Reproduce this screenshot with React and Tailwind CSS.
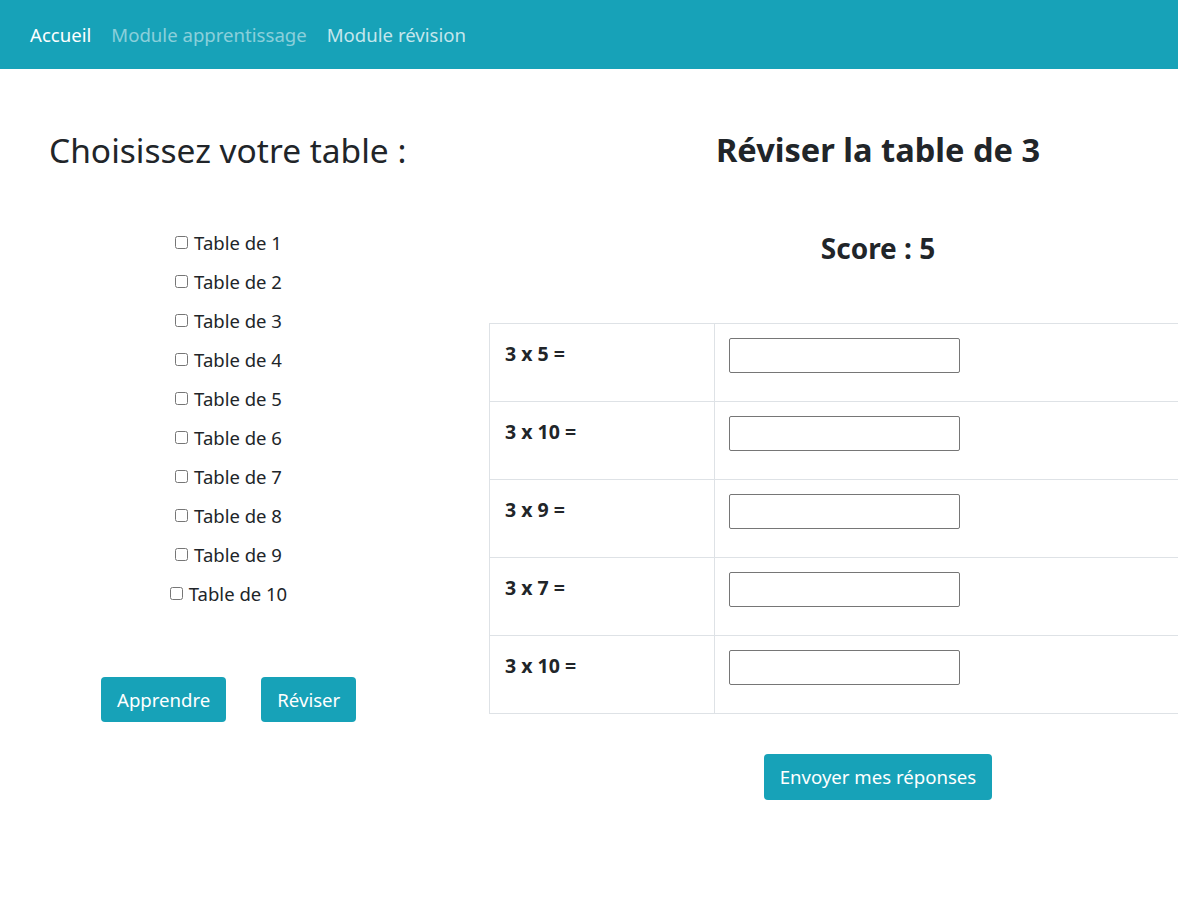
import React from "react";

export default function App() {
  const tables = [1, 2, 3, 4, 5, 6, 7, 8, 9, 10];
  const ops = ["3 x 5 =", "3 x 10 =", "3 x 9 =", "3 x 7 =", "3 x 10 ="];
  return (
    <div className="w-[1178px] h-[908px] overflow-hidden bg-white text-[#212529] font-['Noto_Sans',sans-serif]">
      <nav className="h-[69px] bg-[#17a2b8] flex items-center pl-[30px] pt-[1px] gap-[20px] text-[18.6px]">
        <span className="text-white">Accueil</span>
        <span className="text-white/50">Module apprentissage</span>
        <span className="text-white/75">Module révision</span>
      </nav>
      <div className="flex">
        <div className="w-[489px] shrink-0 flex flex-col">
          <h2 className="pl-[49px] mt-[59px] text-[33.5px] leading-[44px] font-normal">Choisissez votre table :</h2>
          <div className="mt-[51px] ml-[-32px] flex flex-col items-center">
            {tables.map((t) => (
              <label key={t} className="h-[39px] flex items-center gap-[6px] text-[18.5px]">
                <input type="checkbox" className="w-[13px] h-[13px] accent-[#555]" />
                <span>Table de {t}</span>
              </label>
            ))}
          </div>
          <div className="mt-[64px] flex pl-[101px] gap-[35px]">
            <button className="h-[45px] px-[16px] rounded-[4px] bg-[#17a2b8] text-white text-[18.6px]">Apprendre</button>
            <button className="h-[45px] px-[16px] rounded-[4px] bg-[#17a2b8] text-white text-[18.6px]">Réviser</button>
          </div>
        </div>
        <div className="w-[778px] shrink-0 flex flex-col items-center">
          <h2 className="mt-[59px] text-[32.6px] leading-[44px] font-bold">Réviser la table de 3</h2>
          <h4 className="mt-[59px] text-[28px] leading-[34px] font-bold">Score : 5</h4>
          <table className="mt-[58px] w-full border-collapse">
            <tbody>
              {ops.map((o, i) => (
                <tr key={i} className="h-[78px]">
                  <td className="w-[225px] border border-[#dee2e6] align-top pt-[16px] pl-[15px] text-[19.5px] leading-[28px] font-bold">{o}</td>
                  <td className="border border-[#dee2e6] align-top pt-[14px] pl-[14px]">
                    <input type="text" className="block w-[231px] h-[35px] border border-[#767676] rounded-[2px]" />
                  </td>
                </tr>
              ))}
            </tbody>
          </table>
          <button className="mt-[40px] h-[46px] px-[16px] rounded-[4px] bg-[#17a2b8] text-white text-[18.6px]">Envoyer mes réponses</button>
        </div>
      </div>
    </div>
  );
}
